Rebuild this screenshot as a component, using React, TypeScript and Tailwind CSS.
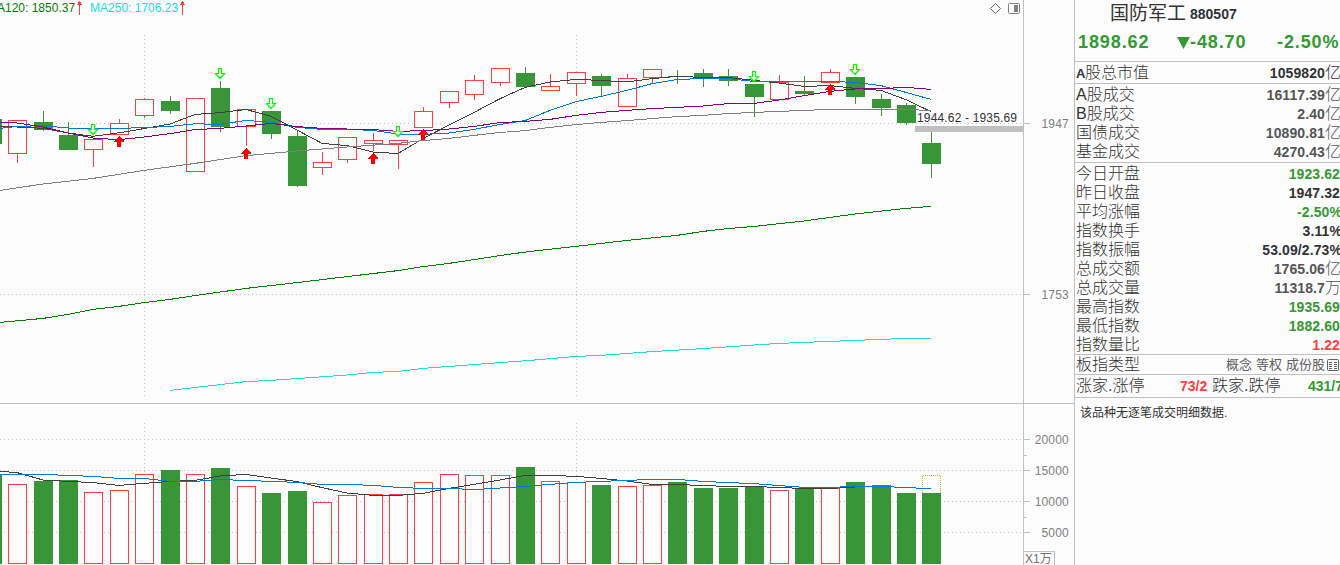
import type { ReactNode } from "react";

type Candle = {
  x: number;
  up: boolean;
  top: number;
  bottom: number;
  high: number;
  low: number;
  vol: number;
};

const BG = "#fcfcfc";
const GREEN = "#389638";
const RED = "#ff4040";
const LINE = "#c0c0c0";

// x, up, body top, body bottom, high, low, volume top
const RAW: [number, number, number, number, number, number, number][] = [
  [-17, 0, 119, 144, 119, 144, 474],
  [8, 1, 120, 154, 120, 163, 484],
  [34, 0, 122, 130, 111, 131, 481],
  [59, 0, 135, 150, 122, 150, 480],
  [84, 1, 139, 150, 139, 167, 492],
  [110, 1, 123, 135, 119, 135, 490],
  [135, 1, 99, 116, 98, 118, 474],
  [161, 0, 101, 111, 96, 114, 470],
  [186, 1, 98, 172, 98, 172, 474],
  [211, 0, 88, 127, 81, 132, 468],
  [237, 1, 109, 127, 109, 146, 486],
  [262, 0, 111, 134, 111, 139, 493],
  [288, 0, 136, 186, 130, 187, 491],
  [313, 1, 162, 168, 152, 175, 502],
  [338, 1, 137, 160, 137, 163, 495],
  [364, 1, 140, 144, 133, 151, 494],
  [389, 1, 140, 145, 140, 169, 494],
  [414, 1, 111, 128, 107, 128, 482],
  [440, 1, 91, 103, 91, 108, 474],
  [465, 1, 80, 95, 75, 100, 475],
  [491, 1, 68, 83, 68, 86, 475],
  [516, 0, 73, 87, 67, 87, 467],
  [541, 1, 86, 91, 74, 91, 481],
  [567, 1, 72, 84, 72, 96, 482],
  [592, 0, 76, 86, 74, 97, 485],
  [618, 1, 78, 107, 74, 107, 486],
  [643, 1, 69, 78, 69, 83, 485],
  [668, 0, 76, 77, 70, 84, 482],
  [694, 0, 73, 78, 69, 87, 488],
  [719, 0, 76, 81, 69, 86, 488],
  [745, 0, 84, 97, 84, 117, 486],
  [770, 1, 82, 100, 75, 100, 490],
  [795, 0, 91, 94, 76, 96, 488],
  [821, 1, 72, 83, 69, 83, 488],
  [846, 0, 77, 97, 77, 104, 482],
  [872, 0, 99, 108, 94, 116, 485],
  [897, 0, 105, 123, 103, 125, 493],
  [922, 0, 143, 164, 132, 178, 493],
];

const CANDLES: Candle[] = RAW.map(([x, up, top, bottom, high, low, vol]) => ({
  x,
  up: up === 1,
  top,
  bottom,
  high,
  low,
  vol,
}));

const PRICE_LINES = [
  {
    color: "#404040",
    points:
      "0,126 17,127 43,128.3 68,133 93,136.3 119,132.8 144,128.6 170,124 195,114.5 220,112.6 246,109.5 271,116.3 297,130 322,143.4 347,145.6 373,152 398,153.6 423,138.6 449,125 474,112.4 500,98.7 525,87.4 550,82 576,79.4 601,80.4 627,82 652,78.6 677,76.4 703,77.4 728,77.4 754,80.4 779,83 804,86.4 830,85.6 855,88.4 881,90.4 906,99.7 931,111.6",
  },
  {
    color: "#0078d7",
    points:
      "0,128.4 17,126.4 43,125.7 68,128 93,128.4 119,128.4 144,127.6 170,126.4 195,123.8 220,124.4 246,120.4 271,122.4 297,127.4 322,129.4 347,129.4 373,130.4 398,134 423,134.4 449,133 474,129.4 500,124.4 525,120.6 550,110.4 576,101.6 601,96.4 627,90.4 652,83.6 677,79.6 703,78.4 728,78.6 754,81.4 830,81.4 855,82.4 881,85.6 906,92.4 931,99.4",
  },
  {
    color: "#800080",
    points:
      "0,122 17,123 43,127 68,133 93,138 119,139.7 144,137 170,133.6 195,129.6 220,128.4 246,126 271,123.4 297,126.6 322,128.4 347,129 373,129.6 398,131.4 423,130.6 449,129 474,126.4 500,122.6 525,121.4 550,119.4 576,115.4 601,112.4 627,110.4 652,108.6 677,107.4 703,106 728,103.6 754,103.4 779,100 804,95.7 830,91.4 855,89 881,88.6 906,87.4 931,89.4",
  },
  {
    color: "#808080",
    points:
      "0,190.4 43,184 93,178.4 144,170.4 195,163.4 246,155.6 297,151 347,147 398,143.4 423,140.6 449,138.4 474,135.4 500,132.5 525,130.6 550,127.4 576,124.6 601,122.4 627,120.6 652,118.6 677,116.6 703,115.4 728,113.6 754,112.4 779,111.4 804,110.4 830,109.4 906,109.4 931,110.6",
  },
  {
    color: "#008000",
    points:
      "0,322.4 43,318.4 68,314.4 93,309.4 119,306.4 144,302.6 170,299.4 195,295.6 246,288.4 297,282.6 347,276.6 398,270.6 423,266.6 449,263.4 500,255.6 530,251.4 576,246.4 627,240.4 677,235.4 703,231.4 728,228.6 754,226.4 804,221 855,214 906,208.4 931,206.4",
  },
  {
    color: "#22dcdc",
    points:
      "170,390.4 246,381.6 271,380.4 347,375 373,372.4 398,371.4 423,368.4 500,362.6 530,360.4 576,356.4 601,355.4 652,351.6 703,348.6 754,345 779,343.4 830,341.4 881,339.4 906,338.4 931,338.4",
  },
];

const VOLUME_LINES = [
  {
    color: "#404040",
    points:
      "0,471.4 17,472.6 43,480 68,481.4 93,482.6 119,485.4 144,483.4 170,481.4 195,480.4 220,476 246,474.4 271,478 297,481.6 322,487.6 347,493 373,495.4 398,495.4 423,493.4 449,488.4 474,484.4 500,480 525,475.4 550,475.4 576,476.4 601,478.4 627,481 652,484.4 677,484.4 703,485.6 728,486.4 754,486.4 779,487.6 804,488.4 830,488.4 855,487 881,486.4 906,487.6 931,488.6",
  },
  {
    color: "#0078d7",
    points:
      "0,474.4 43,474.4 68,475.4 93,476.4 119,478.4 144,478.4 170,481.4 195,481.4 220,479.6 246,480.4 271,481.4 297,482.4 322,484.4 347,484.4 373,485.4 398,487.4 423,488.4 449,488.4 474,489.6 500,488 525,486.4 550,484.4 576,482.4 601,481.4 627,480.4 652,479.4 677,479.4 703,481.4 728,482.6 754,483.6 779,485.6 804,487.4 830,487.4 855,486.4 881,486.4 906,487.6 931,488.6",
  },
];

const SELLS = [
  [93, 124],
  [220, 68],
  [271, 98],
  [398, 126],
  [754, 71],
  [855, 64],
];

const BUYS = [
  [119, 136],
  [246, 148],
  [373, 153],
  [423, 129],
  [830, 84],
];

function Box({ x, top, bottom, up }: { x: number; top: number; bottom: number; up: boolean }) {
  return up ? (
    <rect x={x + 0.5} y={top + 0.5} width={18} height={bottom - top - 1} fill={BG} stroke={RED} />
  ) : (
    <rect x={x} y={top} width={19} height={bottom - top} fill={GREEN} />
  );
}

function Grid({ ys, from, to }: { ys: number[]; from: number; to: number }) {
  return (
    <g stroke={LINE} strokeDasharray="1 3">
      {ys.map((y) => (
        <line key={y} x1={0} x2={1022} y1={y + 0.5} y2={y + 0.5} />
      ))}
      {[144, 576].map((x) => (
        <line key={x} x1={x + 0.5} x2={x + 0.5} y1={from} y2={to} />
      ))}
    </g>
  );
}

function Lines({ lines }: { lines: { color: string; points: string }[] }) {
  return (
    <>
      {lines.map((l) => (
        <polyline key={l.color} points={l.points} fill="none" stroke={l.color} />
      ))}
    </>
  );
}

function PriceChart() {
  return (
    <svg className="block" width={1023} height={385} viewBox="0 18 1023 385" shapeRendering="crispEdges">
      <Grid ys={[123, 294]} from={35} to={396} />
      {CANDLES.map((c) => (
        <g key={c.x}>
          <rect x={c.x + 9} y={c.high} width={1} height={c.low - c.high} fill={c.up ? RED : GREEN} />
          <Box x={c.x} top={c.top} bottom={c.bottom} up={c.up} />
        </g>
      ))}
      <Lines lines={PRICE_LINES} />
      {SELLS.map(([x, y]) => (
        <path
          key={x}
          transform={`translate(${x} ${y})`}
          d="M-1.5 .5h3v5h3l-4.500 5-4.500-5h3z"
          fill={BG}
          stroke="#00ff00"
          strokeWidth={1.2}
          shapeRendering="auto"
        />
      ))}
      {BUYS.map(([x, y]) => (
        <path key={x} transform={`translate(${x} ${y})`} d="M0 0l5 5v1h-3v5h-4v-5h-3v-1z" fill="#ff0000" />
      ))}
      <rect x={915} y={126} width={108} height={6} fill={LINE} />
      <text x={917} y={122} fontSize={12} textLength={100} fill="#333333">
        1944.62 - 1935.69
      </text>
    </svg>
  );
}

function VolumeChart() {
  return (
    <svg className="block" width={1023} height={161} viewBox="0 404 1023 161" shapeRendering="crispEdges">
      <Grid ys={[439, 470, 501, 532]} from={423} to={564} />
      {CANDLES.map((c) => (
        <Box key={c.x} x={c.x} top={c.vol} bottom={564} up={c.up} />
      ))}
      <path d="M922.5 493V475.5H940.5V493" fill={BG} stroke="#c0c000" strokeDasharray="1 1" />
      <Lines lines={VOLUME_LINES} />
    </svg>
  );
}

function AxisLabel({ y, children }: { y: number; children: ReactNode }) {
  return (
    <>
      <path d={`M0 ${y + 0.5}h6`} stroke={LINE} />
      <text x={45} y={y + 5} fontSize={12} letterSpacing={0.2} textAnchor="end" fill="#808080">
        {children}
      </text>
    </>
  );
}

function UpMark() {
  return (
    <svg className="mt-px ml-[2px] block" width={5} height={14} viewBox="0 0 5 14" shapeRendering="crispEdges">
      <path d="M2 0h1v1h1v2h1v1H3v10H2V4H0V3h1V1h1z" fill={RED} />
    </svg>
  );
}

function ChartHeader() {
  return (
    <div className="flex h-[18px] items-start overflow-hidden text-[12px] leading-4 whitespace-pre">
      <span className="-ml-[13px] text-[#008000]">MA120: 1850.37</span>
      <UpMark />
      <span className="ml-[8px] text-[#22dcdc]">MA250: 1706.23</span>
      <UpMark />
      <svg className="mt-[3px] mr-[3px] ml-auto block" width={30} height={12} viewBox="0 0 30 12" fill="none">
        <path d="M5.5.5l5 5-5 5-5-5z" stroke="#606060" />
        <rect x={18.5} y={0.5} width={11} height={10} rx={1} stroke="#808080" />
        <rect x={24} y={2} width={4} height={7} fill="#808080" />
      </svg>
    </div>
  );
}

type RowProps = { label: string; value: string; unit?: string; tone?: string };

function Row({ label, value, unit, tone = "text-[#333333]" }: RowProps) {
  return (
    <div className="flex h-[19px] items-center justify-between">
      <span className="text-[16px] font-light">{label}</span>
      <span
        className={`flex items-center text-[14px] font-bold tracking-[0.1px] ${value.endsWith("%") ? "-mr-[2px]" : ""} ${tone}`}
      >
        {value}
        {unit && <span className="-mr-px text-[16px] font-light tracking-normal">{unit}</span>}
      </span>
    </div>
  );
}

const TURNOVER: RowProps[] = [
  { label: "A股成交", value: "16117.39", unit: "亿", tone: "text-[#555555]" },
  { label: "B股成交", value: "2.40", unit: "亿", tone: "text-[#555555]" },
  { label: "国债成交", value: "10890.81", unit: "亿", tone: "text-[#555555]" },
  { label: "基金成交", value: "4270.43", unit: "亿", tone: "text-[#555555]" },
];

const QUOTES: RowProps[] = [
  { label: "今日开盘", value: "1923.62", tone: "text-[#339933]" },
  { label: "昨日收盘", value: "1947.32" },
  { label: "平均涨幅", value: "-2.50%", tone: "text-[#339933]" },
  { label: "指数换手", value: "3.11%" },
  { label: "指数振幅", value: "53.09/2.73%" },
  { label: "总成交额", value: "1765.06", unit: "亿", tone: "text-[#555555]" },
  { label: "总成交量", value: "11318.7", unit: "万", tone: "text-[#555555]" },
  { label: "最高指数", value: "1935.69", tone: "text-[#339933]" },
  { label: "最低指数", value: "1882.60", tone: "text-[#339933]" },
  { label: "指数量比", value: "1.22", tone: "text-[#ff4040]" },
];

function QuotePanel() {
  return (
    <aside className="flex w-[266px] shrink-0 flex-col overflow-hidden border-l border-[#c0c0c0] leading-none whitespace-nowrap text-[#333333]">
      <div className="flex h-[26px] items-center pl-[35px]">
        <h1 className="text-[19px]">国防军工</h1>
        <span className="mt-[2px] ml-1 text-[14px] font-bold">880507</span>
      </div>
      <div className="flex h-[36px] items-center border-b border-[#c0c0c0] pb-1 pl-[3px] text-[18px] font-bold tracking-[0.9px] text-[#339933]">
        <span className="w-[99px]">1898.62</span>
        <svg className="mt-0.5 block" width={13} height={12} viewBox="0 0 13 12">
          <path d="M0 0h13L6.500 12z" fill="#339933" />
        </svg>
        <span className="w-[87px]">-48.70</span>
        <span>-2.50%</span>
      </div>
      <div className="flex h-[22px] flex-col justify-center border-b border-[#c0c0c0] pl-px">
        <div className="flex items-center justify-between text-[16px] font-light">
          <span>
            <b className="inline-block w-[9px] text-[13px] font-bold">A</b>股总市值
          </span>
          <span className="-mr-px flex items-center">
            <b className="text-[14px] font-bold tracking-[0.1px]">1059820</b>亿
          </span>
        </div>
      </div>
      <div className="h-[79px] border-b border-[#c0c0c0] pt-px pl-px">
        {TURNOVER.map((r) => (
          <Row key={r.label} {...r} />
        ))}
      </div>
      <div className="h-[192px] border-b border-[#c0c0c0] pt-px pl-px">
        {QUOTES.map((r) => (
          <Row key={r.label} {...r} />
        ))}
      </div>
      <div className="flex h-[20px] items-center border-b border-[#c0c0c0] pl-px">
        <span className="text-[16px] font-light">板指类型</span>
        <span className="ml-auto flex gap-1 text-[13px] text-[#606060]">
          <span>概念</span>
          <span>等权</span>
          <span>成份股</span>
        </span>
        <svg className="mr-px ml-0.5 block" width={12} height={12} viewBox="0 0 12 12" fill="none" stroke="#606060">
          <rect x={0.5} y={0.5} width={11} height={11} rx={1} />
          <path d="M2 3.500h3M7 3.500h3M2 5.500h3M7 5.500h3M2 7.500h3M7 7.500h3M2 9.500h3M7 9.500h3" />
        </svg>
      </div>
      <div className="flex h-[23px] items-center border-b border-[#c0c0c0] pl-px text-[16px] font-light">
        <span className="w-[104px] shrink-0">涨家.涨停</span>
        <b className="w-[32px] shrink-0 text-[14px] font-bold text-[#ff4040]">73/2</b>
        <span className="w-[96px] shrink-0">跌家.跌停</span>
        <b className="text-[14px] font-bold text-[#339933]">431/7</b>
      </div>
      <p className="pt-[9px] pl-[5px] text-[12px]">该品种无逐笔成交明细数据.</p>
    </aside>
  );
}

export default function App() {
  return (
    <div className="flex h-[565px] w-[1340px] overflow-hidden bg-[#fcfcfc] font-['Liberation_Sans','Noto_Sans_CJK_SC',sans-serif]">
      <main className="flex w-[1023px] shrink-0 flex-col">
        <ChartHeader />
        <PriceChart />
        <div className="h-px shrink-0 bg-[#c0c0c0]" />
        <VolumeChart />
      </main>
      <div className="w-[51px] shrink-0 border-l border-[#c0c0c0]">
        <svg className="block" width={50} height={565} viewBox="0 0 50 565" shapeRendering="crispEdges">
          <AxisLabel y={123}>1947</AxisLabel>
          <AxisLabel y={294}>1753</AxisLabel>
          <path d="M0 403.500h50M0 455.500h3M0 517.500h3" stroke={LINE} />
          <AxisLabel y={439}>20000</AxisLabel>
          <AxisLabel y={470}>15000</AxisLabel>
          <AxisLabel y={501}>10000</AxisLabel>
          <AxisLabel y={532}>5000</AxisLabel>
          <path d="M0 551.500H30.500V565" fill="none" stroke={LINE} />
          <text x={1} y={563} fontSize={12} fill="#707070">
            X1万
          </text>
        </svg>
      </div>
      <QuotePanel />
    </div>
  );
}
